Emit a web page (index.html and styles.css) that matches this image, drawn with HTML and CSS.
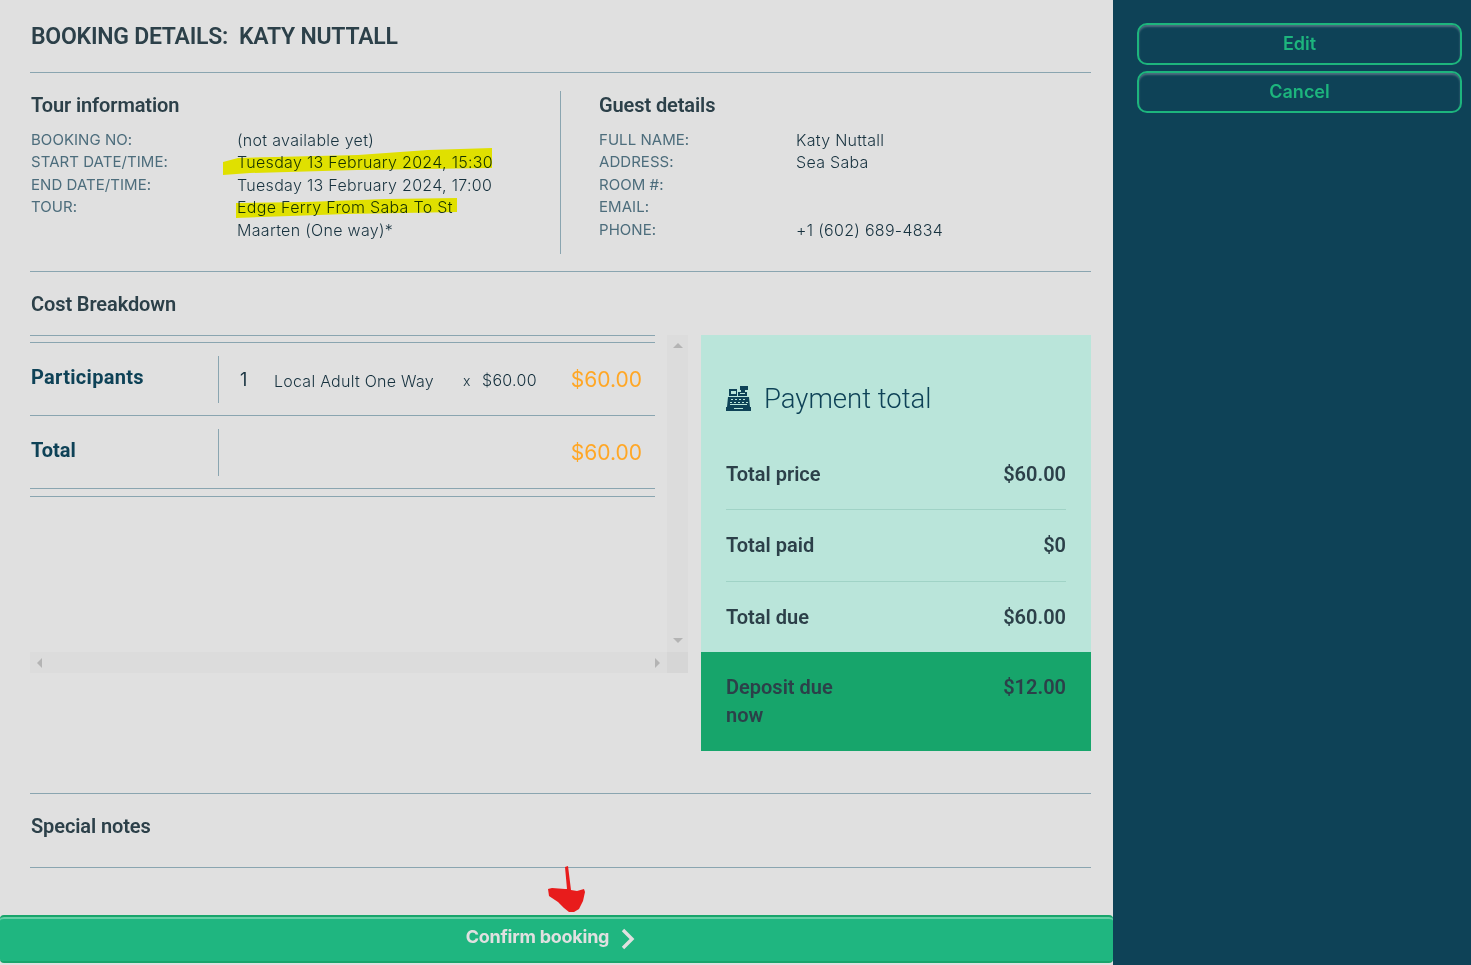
FILE: index.html
```html
<!DOCTYPE html>
<html lang="en">
<head>
    <meta charset="UTF-8">
    <meta name="viewport" content="width=device-width, initial-scale=1.0">
    <title>Booking details</title>
    <link rel="stylesheet" href="styles.css">
</head>
<body>
<div class="page">
    <main class="main">
        <h1 class="title">BOOKING DETAILS:&nbsp; KATY NUTTALL</h1>

        <section class="info">
            <div class="info-col info-tour">
                <h2 class="section-title">Tour information</h2>
                <dl class="facts">
                    <dt>BOOKING NO:</dt><dd>(not available yet)</dd>
                    <dt>START DATE/TIME:</dt><dd>Tuesday 13 February 2024, 15:30</dd>
                    <dt>END DATE/TIME:</dt><dd>Tuesday 13 February 2024, 17:00</dd>
                    <dt>TOUR:</dt><dd>Edge Ferry From Saba To St Maarten (One way)*</dd>
                </dl>
            </div>
            <div class="info-col info-guest">
                <h2 class="section-title">Guest details</h2>
                <dl class="facts">
                    <dt>FULL NAME:</dt><dd>Katy Nuttall</dd>
                    <dt>ADDRESS:</dt><dd>Sea Saba</dd>
                    <dt>ROOM #:</dt><dd></dd>
                    <dt>EMAIL:</dt><dd></dd>
                    <dt>PHONE:</dt><dd>+1 (602) 689-4834</dd>
                </dl>
            </div>
        </section>

        <section class="cost">
            <h2 class="section-title">Cost Breakdown</h2>
            <div class="cost-row">
                <div class="scroller">
                    <div class="scroller-view">
                        <div class="cost-table">
                            <div class="line-row">
                                <div class="line-label">Participants</div>
                                <div class="line-body">
                                    <span class="qty">1</span>
                                    <span class="ticket">Local Adult One Way</span>
                                    <span class="times">x</span>
                                    <span class="unit">$60.00</span>
                                    <span class="amount">$60.00</span>
                                </div>
                            </div>
                            <div class="line-row line-total">
                                <div class="line-label">Total</div>
                                <div class="line-body">
                                    <span class="amount">$60.00</span>
                                </div>
                            </div>
                        </div>
                        <div class="scroll-v">
                            <span class="arrow arrow-up"></span>
                            <span class="arrow arrow-down"></span>
                        </div>
                    </div>
                    <div class="scroll-h">
                        <div class="scroll-h-track">
                            <span class="arrow arrow-left"></span>
                            <span class="arrow arrow-right"></span>
                        </div>
                        <div class="scroll-corner"></div>
                    </div>
                </div>

                <aside class="payment">
                    <div class="payment-head">
                        <svg class="till" viewBox="0 0 25 25" width="25" height="25" aria-hidden="true">
                            <path fill="#0e4257" d="M14 0h8v4h-3v2h2v4H12V6h3V4h-1zM3 3h8v7H3zM2 11h21l1 10H1zM0 21h25v4H0z"/>
                            <path fill="#bae5da" d="M5 5h5v3H5zM14 7h5v1h-5zM5 13h2v1H5zM9 13h2v1H9zM13 13h2v1h-2zM17 13h2v1h-2zM4 16h2v1H4zM8 16h2v1H8zM12 16h2v1h-2zM16 16h2v1h-2zM20 16h2v1h-2zM4 18h17v1H4zM8 22h9v1H8z"/>
                        </svg>
                        <span>Payment total</span>
                    </div>
                    <div class="pay-row pay-first"><span>Total price</span><span>$60.00</span></div>
                    <div class="pay-row"><span>Total paid</span><span>$0</span></div>
                    <div class="pay-row pay-last"><span>Total due</span><span>$60.00</span></div>
                    <div class="pay-deposit"><span class="deposit-label">Deposit due now</span><span>$12.00</span></div>
                </aside>
            </div>
        </section>

        <section class="notes">
            <h2 class="section-title">Special notes</h2>
        </section>

        <button class="confirm" type="button">
            <span class="confirm-text">Confirm booking</span>
            <svg viewBox="0 0 14 22" width="14" height="22" aria-hidden="true">
                <path d="M2 2l9 9-9 9" fill="none" stroke="#e0e0e0" stroke-width="3.4"/>
            </svg>
        </button>
    </main>

    <nav class="side">
        <button class="side-btn" type="button">Edit</button>
        <button class="side-btn" type="button">Cancel</button>
    </nav>

    <!-- marker scribbles on top of the screenshot -->
    <svg class="scribble" viewBox="0 0 1113 965" width="1113" height="965" aria-hidden="true">
        <path class="marker" d="M223 162l15-4 120-3 70-5 64-2v20l-135 2-107 3-27 2zM236 203l70-1 80-3 71-1v14l-110 2-111 4z"/>
        <path class="pen" d="M565 867l3-1 3 24 6 1 7-2 1 3-2 9-4 8-5 3-5 0-5-4-6-6-9-6-1-7 4-1 13 1 2 0z"/>
    </svg>
</div>
</body>
</html>
```
FILE: styles.css
```css
* {
    box-sizing: border-box;
}
html, body {
    margin: 0;
    height: 965px;
    overflow: hidden;
}
body {
    font-family: Inter, "Liberation Sans", sans-serif;
    font-weight: 300;
    color: #17323f;
    background-color: #e0e0e0;
}
.page {
    position: relative;
    display: flex;
    height: 965px;
}

/* main column */
.main {
    position: relative;
    width: 1113px;
    padding: 0 22px 0 30px;
    background-color: #e0e0e0;
}
.title {
    height: 73px;
    margin: 0;
    padding: 22px 0 0 1px;
    font-family: Roboto, sans-serif;
    font-size: 23px;
    line-height: 30px;
    font-weight: 600;
    letter-spacing: -0.25px;
    color: #2c4049;
    border-bottom: 1px solid #8aa5b0;
}
.section-title {
    margin: 0;
    padding-left: 1px;
    font-family: Roboto, sans-serif;
    font-size: 20px;
    line-height: 26px;
    font-weight: 600;
    letter-spacing: -0.1px;
    color: #2c4049;
}

/* tour + guest */
.info {
    display: flex;
    height: 199px;
    padding: 18px 0 17px;
    border-bottom: 1px solid #8aa5b0;
}
.info-col {
    padding-top: 1px;
}
.info-tour {
    width: 531px;
    padding-right: 60px;
    border-right: 1px solid #8aa5b0;
}
.info-guest {
    padding-left: 37px;
    flex: 1;
}
.facts {
    display: grid;
    grid-template-columns: 207px 1fr;
    margin: 10.6px 0 0;
    font-size: 16px;
    line-height: 22.5px;
    letter-spacing: 0.3px;
}
.facts dt {
    padding-left: 1px;
    font-size: 15px;
    color: #4d6d7c;
    font-weight: 400;
    letter-spacing: 0.05px;
}
.facts dd {
    margin: 0;
    min-height: 22.5px;
}
.info-guest .facts {
    grid-template-columns: 198px 1fr;
}

/* cost */
.cost {
    height: 522px;
    padding-top: 19px;
    border-bottom: 1px solid #8aa5b0;
}
.cost-row {
    display: flex;
    justify-content: space-between;
    margin-top: 18px;
}
.scroller {
    width: 658px;
}
.scroller-view {
    display: flex;
    height: 317px;
}
.cost-table {
    width: 625px;
    height: 162px;
    margin-right: 12px;
    padding-top: 6px;
    border-top: 1px solid #8aa5b0;
    border-bottom: 1px solid #8aa5b0;
}
.line-row {
    display: flex;
    height: 73px;
    padding: 13px 0 12px;
    border-top: 1px solid #8aa5b0;
}
.line-total {
    border-bottom: 1px solid #8aa5b0;
    height: 74px;
}
.line-label {
    width: 189px;
    padding: 8px 0 0 1px;
    font-family: Roboto, sans-serif;
    font-size: 20px;
    line-height: 26px;
    font-weight: 700;
    letter-spacing: 0.3px;
    color: #0e4257;
    border-right: 1px solid #8aa5b0;
}
.line-total .line-label {
    letter-spacing: 0;
}
.line-body {
    flex: 1;
    display: flex;
    align-items: center;
    padding: 0 13px 0 21px;
    font-size: 16px;
}
.qty {
    width: 34px;
    font-size: 18px;
    font-weight: 400;
}
.ticket {
    width: 189px;
    padding-top: 3px;
    letter-spacing: 0.25px;
}
.times {
    width: 19px;
    font-size: 14px;
    padding-top: 2px;
}
.unit {
    letter-spacing: 0.3px;
    padding-top: 1px;
}
.amount {
    margin-left: auto;
    font-size: 21px;
    color: #ffa726;
    font-weight: 400;
}
.scroll-v {
    display: flex;
    flex-direction: column;
    justify-content: space-between;
    align-items: center;
    width: 21px;
    padding: 8px 0 9px;
    background-color: #dcdcdc;
}
.scroll-h {
    display: flex;
    height: 21px;
}
.scroll-h-track {
    display: flex;
    justify-content: space-between;
    align-items: center;
    flex: 1;
    padding: 0 7px;
    background-color: #dcdcdc;
}
.scroll-corner {
    width: 21px;
    background-color: #d6d6d6;
}
.arrow {
    width: 0;
    height: 0;
    border-style: solid;
    border-color: transparent;
}
.arrow-up {
    border-width: 0 5px 5px;
    border-bottom-color: #b4b4b4;
}
.arrow-down {
    border-width: 5px 5px 0;
    border-top-color: #b4b4b4;
}
.arrow-left {
    border-width: 5px 5px 5px 0;
    border-right-color: #b4b4b4;
}
.arrow-right {
    border-width: 5px 0 5px 5px;
    border-left-color: #b4b4b4;
}

/* payment box */
.payment {
    width: 390px;
    height: 416px;
    background-color: #bae5da;
    font-family: Roboto, sans-serif;
    font-size: 20px;
    font-weight: 600;
    color: #2c4049;
}
.payment-head {
    display: flex;
    align-items: center;
    gap: 13px;
    height: 103px;
    padding: 24px 25px 0;
    font-size: 27.5px;
    font-weight: 300;
    color: #0e4257;
}
.pay-row {
    display: flex;
    justify-content: space-between;
    height: 72px;
    margin: 0 25px;
    padding-top: 22px;
    line-height: 26px;
    border-bottom: 1px solid #a0d3c6;
}
.pay-first {
    padding-top: 23px;
}
.pay-last {
    height: 70px;
    border-bottom: 0;
}
.pay-deposit {
    display: flex;
    justify-content: space-between;
    height: 99px;
    padding: 21px 25px 0;
    line-height: 28px;
    background-color: #17a56b;
}
.deposit-label {
    width: 130px;
}

/* notes + confirm */
.notes {
    height: 74px;
    padding-top: 19px;
    border-bottom: 1px solid #8aa5b0;
}
.confirm {
    position: absolute;
    left: 0;
    top: 915px;
    display: flex;
    justify-content: center;
    align-items: center;
    gap: 12px;
    width: 1113px;
    height: 48px;
    padding: 0 12px 0 0;
    font-family: Inter, sans-serif;
    font-size: 18px;
    font-weight: 700;
    letter-spacing: -0.25px;
    color: #e0e0e0;
    background-color: #1fb680;
    border: 0;
    border-top: 2px solid #17a56b;
    border-bottom: 2px solid #17a56b;
    border-radius: 4px;
    box-shadow: inset 0 2px 0 #66cfa6;
    cursor: pointer;
}
.confirm-text {
    padding-bottom: 5px;
}

/* right sidebar */
.side {
    display: flex;
    flex-direction: column;
    gap: 6px;
    flex: 1;
    padding: 23px 9px 0 24px;
    background-color: #0e4257;
}
.side-btn {
    height: 42px;
    padding-bottom: 3px;
    font-family: Inter, sans-serif;
    font-size: 18px;
    font-weight: 600;
    color: #1db57d;
    background-color: #0e4257;
    border: 2.5px solid #1db57d;
    border-radius: 10px;
    box-shadow: inset 0 2px 2px #4d6f80;
    cursor: pointer;
}

.scribble {
    position: absolute;
    left: 0;
    top: 0;
    pointer-events: none;
}
.marker {
    fill: #e0e000;
    mix-blend-mode: darken;
}
.pen {
    fill: #e81c1c;
}
```
